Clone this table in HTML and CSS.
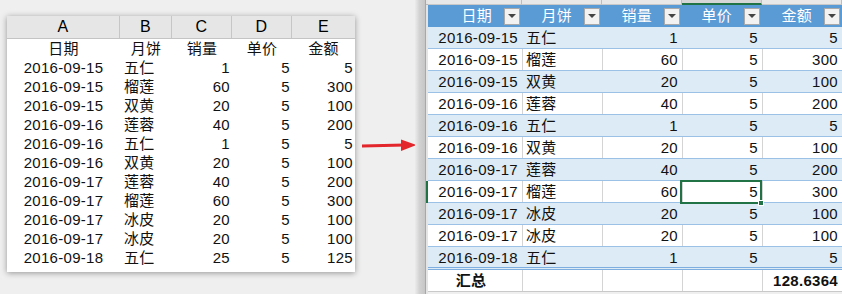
FILE: index.html
```html
<!DOCTYPE html>
<html lang="zh">
<head>
<meta charset="utf-8">
<link rel="stylesheet" href="styles.css">
</head>
<body>
<div class="page">
  <div class="left-wrap">
    <div class="panel">
      <div class="lrow lhead">
        <div class="lh">A</div><div class="lh">B</div><div class="lh">C</div><div class="lh">D</div><div class="lh">E</div>
      </div>
      <div class="lrow">
        <div class="c">日期</div><div class="c">月饼</div><div class="c">销量</div><div class="c">单价</div><div class="c">金额</div>
      </div>
      <div class="lrow"><div class="c">2016-09-15</div><div class="l">五仁</div><div class="r">1</div><div class="r">5</div><div class="r">5</div></div>
      <div class="lrow"><div class="c">2016-09-15</div><div class="l">榴莲</div><div class="r">60</div><div class="r">5</div><div class="r">300</div></div>
      <div class="lrow"><div class="c">2016-09-15</div><div class="l">双黄</div><div class="r">20</div><div class="r">5</div><div class="r">100</div></div>
      <div class="lrow"><div class="c">2016-09-16</div><div class="l">莲蓉</div><div class="r">40</div><div class="r">5</div><div class="r">200</div></div>
      <div class="lrow"><div class="c">2016-09-16</div><div class="l">五仁</div><div class="r">1</div><div class="r">5</div><div class="r">5</div></div>
      <div class="lrow"><div class="c">2016-09-16</div><div class="l">双黄</div><div class="r">20</div><div class="r">5</div><div class="r">100</div></div>
      <div class="lrow"><div class="c">2016-09-17</div><div class="l">莲蓉</div><div class="r">40</div><div class="r">5</div><div class="r">200</div></div>
      <div class="lrow"><div class="c">2016-09-17</div><div class="l">榴莲</div><div class="r">60</div><div class="r">5</div><div class="r">300</div></div>
      <div class="lrow"><div class="c">2016-09-17</div><div class="l">冰皮</div><div class="r">20</div><div class="r">5</div><div class="r">100</div></div>
      <div class="lrow"><div class="c">2016-09-17</div><div class="l">冰皮</div><div class="r">20</div><div class="r">5</div><div class="r">100</div></div>
      <div class="lrow"><div class="c">2016-09-18</div><div class="l">五仁</div><div class="r">25</div><div class="r">5</div><div class="r">125</div></div>
    </div>
  </div>

  <div class="arrow-col">
    <svg class="arrow" width="62" height="20" viewBox="0 0 62 20">
      <line x1="7" y1="11" x2="50" y2="10" stroke="#e3262b" stroke-width="3"/>
      <polygon points="46,4.5 61.5,10 46,16" fill="#e3262b"/>
    </svg>
  </div>

  <div class="right">
    <div class="bezel"></div>
    <div class="rowhdr">
      <div class="rh-corner"></div>
      <div class="rh-sel"></div>
    </div>
    <div class="sheet">
      <div class="colstrip">
        <div></div><div></div><div></div><div class="on"></div><div></div>
      </div>
      <div class="rrow rhead">
        <div class="hc"><span>日期</span><i class="fb"></i></div>
        <div class="hc"><span>月饼</span><i class="fb"></i></div>
        <div class="hc"><span>销量</span><i class="fb"></i></div>
        <div class="hc"><span>单价</span><i class="fb"></i></div>
        <div class="hc"><span>金额</span><i class="fb"></i></div>
      </div>
      <div class="rrow band"><div class="r">2016-09-15</div><div class="l">五仁</div><div class="r">1</div><div class="r">5</div><div class="r">5</div></div>
      <div class="rrow"><div class="r">2016-09-15</div><div class="l">榴莲</div><div class="r">60</div><div class="r">5</div><div class="r">300</div></div>
      <div class="rrow band"><div class="r">2016-09-15</div><div class="l">双黄</div><div class="r">20</div><div class="r">5</div><div class="r">100</div></div>
      <div class="rrow"><div class="r">2016-09-16</div><div class="l">莲蓉</div><div class="r">40</div><div class="r">5</div><div class="r">200</div></div>
      <div class="rrow band"><div class="r">2016-09-16</div><div class="l">五仁</div><div class="r">1</div><div class="r">5</div><div class="r">5</div></div>
      <div class="rrow"><div class="r">2016-09-16</div><div class="l">双黄</div><div class="r">20</div><div class="r">5</div><div class="r">100</div></div>
      <div class="rrow band"><div class="r">2016-09-17</div><div class="l">莲蓉</div><div class="r">40</div><div class="r">5</div><div class="r">200</div></div>
      <div class="rrow"><div class="r">2016-09-17</div><div class="l">榴莲</div><div class="r">60</div><div class="r">5</div><div class="r">300</div></div>
      <div class="rrow band"><div class="r">2016-09-17</div><div class="l">冰皮</div><div class="r">20</div><div class="r">5</div><div class="r">100</div></div>
      <div class="rrow"><div class="r">2016-09-17</div><div class="l">冰皮</div><div class="r">20</div><div class="r">5</div><div class="r">100</div></div>
      <div class="rrow band last"><div class="r">2016-09-18</div><div class="l">五仁</div><div class="r">1</div><div class="r">5</div><div class="r">5</div></div>
      <div class="rrow total"><div class="c b">汇总</div><div></div><div></div><div></div><div class="r b">128.6364</div></div>
      <div class="selbox"><i class="handle"></i></div>
    </div>
  </div>
</div>
</body>
</html>
```

FILE: styles.css
```css
* { box-sizing: border-box; margin: 0; padding: 0; }
html, body { width: 842px; height: 294px; overflow: hidden; }
body {
  background: #efefef;
  font-family: "Liberation Sans", "Noto Sans CJK SC", sans-serif;
  font-size: 15px;
  letter-spacing: 0.3px;
  color: #111;
}
.page { display: flex; height: 294px; }

/* left screenshot */
.left-wrap { padding: 16px 0 0 7px; width: 355px; flex: none; }
.panel {
  width: 348px;
  height: 256px;
  background: #fff;
  box-shadow: 0 1px 6px rgba(0,0,0,0.38);
}
.lrow {
  display: grid;
  grid-template-columns: 113px 52px 60px 60px 63px;
  height: 19px;
  line-height: 19px;
}
.lrow.lhead {
  height: 23px;
  line-height: 22px;
  background: #e6e6e6;
  border-bottom: 1px solid #c4c4c4;
  font-size: 16px;
}
.lh { text-align: center; border-right: 1px solid #c6c6c6; color: #000; }
.lh:last-child { border-right: 0; }
.lrow .c { text-align: center; white-space: nowrap; }
.lrow .l { padding-left: 4px; white-space: nowrap; }
.lrow .r { text-align: right; padding-right: 2px; }

/* arrow */
.arrow-col { width: 60px; flex: none; padding-top: 135px; }
.arrow { display: block; overflow: visible; }

/* right screenshot */
.right { display: flex; flex: 1; height: 294px; }
.bezel {
  width: 10px;
  flex: none;
  background: linear-gradient(to right, #ececec, #d2d2d2 45%, #c6c6c6);
}
.rowhdr {
  width: 3px;
  flex: none;
  background: #e4e4e4;
  border-left: 1px solid #a8a8a8;
  display: flex;
  flex-direction: column;
}
.rh-corner { height: 5px; border-bottom: 1px solid #b8b8b8; }
.rh-sel { margin-top: 176px; height: 22px; background: #217346; }

.sheet { position: relative; width: 414px; flex: none; overflow: hidden; }
.colstrip {
  display: grid;
  grid-template-columns: 94px 80px 80px 80px 80px;
  height: 5px;
  background: #e8e8e8;
}
.colstrip div { border-right: 1px solid #bdbdbd; border-bottom: 1px solid #c8c8c8; }
.colstrip div.on { border-bottom: 2px solid #217346; background: #d6d6d6; }

.rrow {
  display: grid;
  grid-template-columns: 94px 80px 80px 80px 80px;
  height: 22px;
  line-height: 21px;
  background: #fff;
  border-bottom: 1px solid #9bc2e6;
}
.rrow > div { border-left: 1px solid #d4d4d4; white-space: nowrap; }
.rrow > div:first-child { border-left: 0; }
.rrow.band { background: #ddebf7; }
.rrow.band > div { border-left-color: transparent; }
.rrow.last { height: 23px; border-bottom: 3px double #7eaee0; }
.rrow .r { text-align: right; padding-right: 4px; }
.rrow .l { padding-left: 3px; }
.rrow .c { text-align: center; padding-right: 8px; }
.rrow .b { font-weight: bold; }
.rrow.total { border-bottom: 1px solid #c9c9c9; }

.rrow.rhead { background: #5b9bd5; border-bottom: 0; line-height: 22px; }
.rrow.rhead > div { border-left: 0; }
.hc {
  display: flex;
  align-items: center;
  justify-content: flex-end;
  gap: 12px;
  padding-right: 2px;
  color: #fff;
}
.fb {
  width: 16px;
  height: 17px;
  background: #f2f2f2;
  border: 1px solid #a9a9a9;
  display: flex;
  align-items: center;
  justify-content: center;
}
.fb::after {
  content: "";
  border-left: 4px solid transparent;
  border-right: 4px solid transparent;
  border-top: 4px solid #444;
}

.selbox {
  position: absolute;
  left: 252px;
  top: 180px;
  width: 82px;
  height: 24px;
  border: 2px solid #217346;
}
.handle {
  position: absolute;
  right: -4px;
  bottom: -4px;
  width: 6px;
  height: 6px;
  background: #217346;
  border: 1px solid #fff;
}
```
